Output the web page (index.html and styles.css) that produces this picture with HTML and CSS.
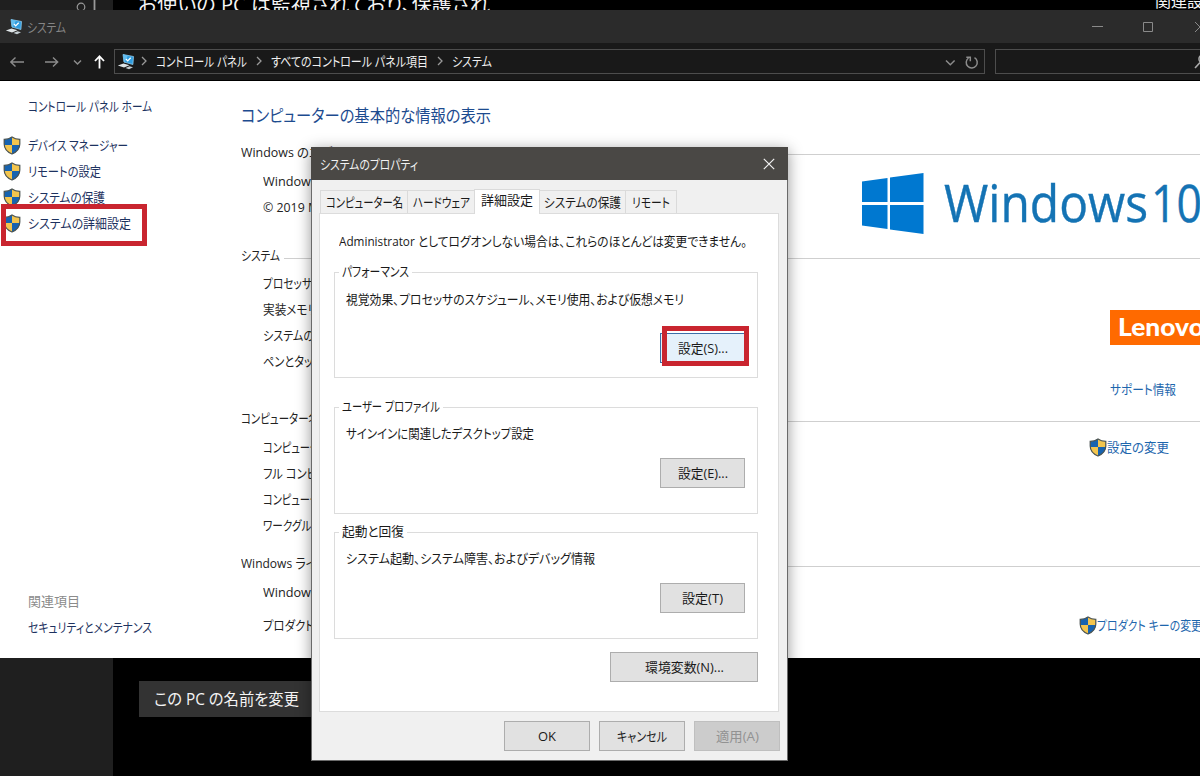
FILE: index.html
```
<!DOCTYPE html>
<html lang="ja">
<head>
<meta charset="utf-8">
<title>システム</title>
<link rel="stylesheet" href="styles.css">
</head>
<body>
<svg class="defs" width="0" height="0">
  <symbol id="shield" viewBox="0 0 18 19">
    <path d="M9 1C6.800 2.600 4 3.300 1.200 3.300V8c0 5 3 8 7.800 10 4.800-2 7.800-5 7.800-10V3.300C14 3.300 11.200 2.600 9 1z" fill="#f3c54e"/>
    <path d="M9 1C6.800 2.600 4 3.300 1.200 3.300V9H9zM9 9h7.700c-.4 4.500-3.300 7.200-7.700 9z" fill="#1763b0"/>
    <path d="M9 1C6.800 2.600 4 3.300 1.200 3.300V8c0 5 3 8 7.800 10 4.800-2 7.800-5 7.800-10V3.300C14 3.300 11.200 2.600 9 1z" fill="none" stroke="#4a5352" stroke-width="1.2"/>
  </symbol>
  <symbol id="pc" viewBox="0 0 18 17">
    <path d="M6 1.500l10.500 2-.6 8L7 9z" fill="#2f9de0" stroke="#8fc9ea" stroke-width=".8"/>
    <path d="M6 1.500l5 1-3.500 7-.5-.3z" fill="#63bdee"/>
    <path d="M9 6l1.700 1.900 3-3.200" fill="none" stroke="#fff" stroke-width="1.300"/>
    <path d="M.8 12.500l5.700-2 6 1.700-5.500 2.300z" fill="#dfe5e8"/>
    <path d="M8.500 15l4-1.800 3.500 1-4 2z" fill="#c5ced3"/>
  </symbol>
</svg>
<div class="desktop">
  <div class="settings">
    <div class="settings-side">
      <svg class="settings-search" width="24" height="12" viewBox="0 0 24 12" fill="none" stroke="#999" stroke-width="1.200"><circle cx="9" cy="7" r="3.800"/><path d="M22.500 0v12" stroke-width="1.800"/></svg>
    </div>
    <div class="settings-main">
      <div class="settings-top">
        <span class="t" data-w="352">お使いの PC は監視されており、保護され</span>
        <span class="settings-rel">関連設定</span>
      </div>
      <div class="rename"><span class="t" data-w="145">この PC の名前を変更</span></div>
    </div>
  </div>

  <div class="window">
    <div class="titlebar">
      <svg width="18" height="17"><use href="#pc"/></svg>
      <span class="t caption" data-w="39">システム</span>
      <svg class="win-buttons" width="112" height="20" viewBox="0 0 112 20" fill="none" stroke="#8a8a8a"><path d="M4 9.500h11M55.500 5.500h9v9h-9zM107 5l10 10M117 5l-10 10"/></svg>
    </div>
    <div class="navbar">
      <svg class="nav-icons" width="114" height="24" viewBox="0 0 114 24" fill="none" stroke="#8c8c8c" stroke-width="1.400">
        <path d="M24 13H11M15.500 8.500L10.800 13l4.700 4.500M45 13h13M53 8.500l4.700 4.500-4.700 4.500"/>
        <path d="M74 11.500l3.500 3.500 3.500-3.500" stroke-width="1.500"/>
        <path d="M99.500 19.500v-12M95 12l4.500-4.800L104 12" stroke="#fff" stroke-width="1.800"/>
      </svg>
      <div class="address">
        <svg width="18" height="17"><use href="#pc"/></svg>
        <svg class="sep first" width="8" height="10"><path d="M2 1l4 4-4 4"/></svg>
        <span class="t" data-w="91">コントロール パネル</span>
        <svg class="sep" width="8" height="10"><path d="M2 1l4 4-4 4"/></svg>
        <span class="t" data-w="157">すべてのコントロール パネル項目</span>
        <svg class="sep" width="8" height="10"><path d="M2 1l4 4-4 4"/></svg>
        <span class="t" data-w="40">システム</span>
        <svg class="refresh" width="38" height="18" viewBox="0 0 38 18" fill="none" stroke="#8c8c8c" stroke-width="1.500"><path d="M2 7.500l4.300 4.300 4.300-4.300"/><path d="M30.500 4.700A5.500 5.500 0 1 1 24.500 5M22.300 4.200h4v4"/></svg>
      </div>
      <div class="search">
        <svg width="16" height="16" viewBox="0 0 16 16" fill="none" stroke="#aaa" stroke-width="1.600"><path d="M1 14l5-5.500"/><circle cx="9" cy="5" r="4"/></svg>
      </div>
    </div>
    <div class="pane">
      <div class="sidebar">
        <div class="home"><span class="t" data-w="124">コントロール パネル ホーム</span></div>
        <div class="task"><svg width="18" height="19"><use href="#shield"/></svg><span class="t" data-w="100">デバイス マネージャー</span></div>
        <div class="task"><svg width="18" height="19"><use href="#shield"/></svg><span class="t" data-w="73">リモートの設定</span></div>
        <div class="task"><svg width="18" height="19"><use href="#shield"/></svg><span class="t" data-w="77">システムの保護</span></div>
        <div class="task marked"><svg width="18" height="19"><use href="#shield"/></svg><span class="t" data-w="103">システムの詳細設定</span></div>
        <div class="see-also"><span class="muted">関連項目</span><span class="t" data-w="124">セキュリティとメンテナンス</span></div>
      </div>
      <div class="main">
        <h1><span class="t" data-w="250">コンピューターの基本的な情報の表示</span></h1>
        <div class="section edition">
          <div class="head"><span class="t" data-w="132">Windows のエディション</span><i></i></div>
          <div class="body">
            <div class="rows"><div><span class="t" data-w="54">Windows</span></div><div><span class="t" data-w="56">© 2019 M</span></div></div>
            <div class="brand">
              <svg width="64" height="64" viewBox="0 0 64 64" fill="#0078d0"><path d="M1 9.500L26.500 6v24H1zM29 5.600L62.500 1v29H29zM1 33h25.500v24L1 53.500zM29 33h33.500v29L29 57.400z"/></svg>
              <span class="t brand-name" data-w="204">Windows</span><span class="t brand-name" data-w="51">10</span>
            </div>
          </div>
        </div>
        <div class="section system">
          <div class="head"><span class="t" data-w="39">システム</span><i></i></div>
          <div class="body">
            <div class="rows"><div><span class="t" data-w="49">プロセッサ</span></div><div><span class="t" data-w="54">実装メモリ</span></div><div><span class="t" data-w="51">システムの</span></div><div><span class="t" data-w="60">ペンとタッチ</span></div></div>
            <div class="oem"><div class="lenovo"><span class="t" data-w="86">Lenovo</span></div><span class="t" data-w="66">サポート情報</span></div>
          </div>
        </div>
        <div class="section name">
          <div class="head"><span class="t" data-w="78">コンピューター名</span><i></i></div>
          <div class="body">
            <div class="rows"><div><span class="t" data-w="66">コンピューター</span></div><div><span class="t" data-w="107">フル コンピューター名</span></div><div><span class="t" data-w="66">コンピューター</span></div><div><span class="t" data-w="68">ワークグループ</span></div></div>
            <div class="link change"><svg width="18" height="19"><use href="#shield"/></svg><span class="t" data-w="62">設定の変更</span></div>
          </div>
        </div>
        <div class="section license">
          <div class="head"><span class="t" data-w="132">Windows ライセンス認証</span><i></i></div>
          <div class="body">
            <div class="rows"><div><span class="t" data-w="54">Windows</span></div><div><span class="t" data-w="51">プロダクト</span></div></div>
            <div class="link key"><svg width="18" height="19"><use href="#shield"/></svg><span class="t" data-w="105">プロダクト キーの変更</span></div>
          </div>
        </div>
      </div>
    </div>
  </div>

  <div class="dialog">
    <div class="dialog-title"><span class="t" data-w="98">システムのプロパティ</span>
      <svg width="12" height="12" viewBox="0 0 12 12" stroke="#f2f2f2" stroke-width="1.200"><path d="M.8.800l10.400 10.400M11.200.800L.8 11.200"/></svg>
    </div>
    <div class="tabs">
      <div class="tab t1"><span class="t" data-w="77">コンピューター名</span></div>
      <div class="tab t2"><span class="t" data-w="57">ハードウェア</span></div>
      <div class="tab t3 on"><span class="t" data-w="52">詳細設定</span></div>
      <div class="tab t4"><span class="t" data-w="77">システムの保護</span></div>
      <div class="tab t5"><span class="t" data-w="38">リモート</span></div>
    </div>
    <div class="sheet">
      <div class="note"><span class="t" data-w="408">Administrator としてログオンしない場合は、これらのほとんどは変更できません。</span></div>
      <fieldset class="g1">
        <legend><span class="t" data-w="67">パフォーマンス</span></legend>
        <div class="desc"><span class="t" data-w="338">視覚効果、プロセッサのスケジュール、メモリ使用、および仮想メモリ</span></div>
        <div class="btn hot"><span class="t" data-w="50">設定(S)...</span></div>
      </fieldset>
      <fieldset class="g2">
        <legend><span class="t" data-w="98">ユーザー プロファイル</span></legend>
        <div class="desc"><span class="t" data-w="188">サインインに関連したデスクトップ設定</span></div>
        <div class="btn"><span class="t" data-w="50">設定(E)...</span></div>
      </fieldset>
      <fieldset class="g3">
        <legend><span class="t" data-w="62">起動と回復</span></legend>
        <div class="desc"><span class="t" data-w="249">システム起動、システム障害、およびデバッグ情報</span></div>
        <div class="btn"><span class="t" data-w="41">設定(T)</span></div>
      </fieldset>
      <div class="btn env"><span class="t" data-w="79">環境変数(N)...</span></div>
    </div>
    <div class="footer">
      <div class="btn"><span class="t" data-w="18">OK</span></div>
      <div class="btn"><span class="t" data-w="50">キャンセル</span></div>
      <div class="btn off"><span class="t" data-w="43">適用(A)</span></div>
    </div>
  </div>
</div>
<script src="fit.js"></script>
</body>
</html>
```

FILE: styles.css
```
*, *::after { box-sizing: border-box; }
body {
  margin: 0;
  font: 13px/20px "Open Sans", "Noto Sans CJK JP", sans-serif;
  font-feature-settings: "palt";
  color: #222;
}
.defs { position: absolute; }
.desktop { position: relative; width: 1200px; height: 776px; overflow: hidden; background: #000; }
svg { display: block; flex: none; }
.t { display: inline-block; white-space: nowrap; transform-origin: 0 50%; flex: none; }

/* settings window at the back */
.settings { display: flex; height: 776px; }
.settings-side { width: 113px; flex: none; background: #1f1f1f; }
.settings-search { margin-left: 72px; }
.settings-main { flex: 1; min-width: 0; color: #f4f4f4; }
.settings-top { display: flex; height: 10px; padding-left: 25px; font-size: 20px; line-height: 10px; white-space: nowrap; }
.settings-rel { margin-left: 665px; font-size: 16px; line-height: 2px; }
.rename {
  margin: 671px 0 0 26px; padding-left: 15px; width: 300px; height: 36px;
  background: #333; font-size: 16px; line-height: 36px;
}

/* control panel window */
.window { position: absolute; left: 0; top: 10px; width: 1200px; height: 648px; overflow: hidden; background: #fff; }
.titlebar { display: flex; align-items: center; height: 33px; padding-left: 5px; background: #2b2b2b; }
.caption { margin-left: 4px; color: #858585; }
.win-buttons { margin-left: auto; }
.navbar { display: flex; height: 38px; padding-top: 6px; background: #191919; border-bottom: 1px solid #000; }
.nav-icons { flex: none; }
.address { display: flex; align-items: center; flex: none; width: 871px; height: 25px; padding-left: 2px; border: 1px solid #4d4d4d; color: #f0f0f0; }
.address .t { margin-top: -2px; }
.address .sep { fill: none; stroke: #999; stroke-width: 1.3; margin: -1px 8px 0; }
.address .first { margin-left: 5px; }
.address .refresh { margin-left: auto; margin-right: 2px; }
.search { width: 220px; height: 25px; margin-left: 10px; padding: 4px 0 0 198px; border: 1px solid #4d4d4d; flex: none; }
.pane { display: flex; height: 577px; }
.sidebar { width: 241px; flex: none; padding-top: 15px; color: #1d3260; }
.home { padding-left: 28px; margin-bottom: 16px; }
.task { display: flex; align-items: center; height: 26px; padding-left: 3px; gap: 7px; }
.marked { position: relative; }
.marked::after { content: ""; position: absolute; left: 1px; top: -6px; width: 146px; height: 42px; border: 5px solid #c9252f; }
.see-also { display: flex; flex-direction: column; align-items: flex-start; gap: 6px; padding: 355px 0 0 28px; }
.muted { color: #8b8b8b; }
.main { width: 959px; flex: none; padding-top: 20px; }
h1 { margin: 0 0 9px; font-size: 17px; line-height: 30px; font-weight: 400; color: #1d4b8f; }
.head { display: flex; height: 26px; line-height: 25px; gap: 4px; }
.head i { flex: 1; height: 1px; margin-top: 15px; background: #cfcfcf; }
.edition .head i { margin-top: 14px; }
.edition { height: 103px; }
.system { height: 163px; }
.name { height: 145px; }
.body { display: flex; }
.rows { width: 619px; flex: none; padding: 2px 0 0 22px; line-height: 26px; }
.rows > div { height: 26px; }
.system .rows { line-height: 25px; }
.license .rows { padding-top: 3px; line-height: 25px; }
.license .rows > div:last-child { margin-top: 7px; }
.brand { display: flex; align-items: center; height: 64px; margin: 6px 0 0 1px; }
.brand-name { font-size: 51px; line-height: 64px; margin-top: -5px; color: #1473b4; -webkit-text-stroke: .4px #1473b4; }
.brand svg { margin-right: 19px; }
.brand-name + .brand-name { margin-left: 3px; }
.oem { margin: 41px 0 0 250px; color: #1d66ad; }
.lenovo { width: 120px; height: 35px; margin-bottom: 34px; padding-left: 8px; background: #ff6a00; color: #fff; font: 900 24px/33px Lato, sans-serif; }
.link { display: flex; align-items: center; height: 20px; color: #1d66ad; }
.change { margin: 5px 0 0 229px; }
.key { margin: 38px 0 0 219px; }

/* properties dialog */
.dialog {
  position: absolute; left: 311px; top: 147px; width: 477px; height: 614px;
  background: #f0f0f0; border: 1px solid #6a6a6a; color: #1a1a1a;
  box-shadow: 0 3px 14px rgba(0, 0, 0, .42);
}
.dialog-title {
  display: flex; align-items: center; justify-content: space-between;
  height: 33px; margin: -1px -1px 0; padding: 0 13px 0 9px; background: #4a4845; color: #f2f2f2;
}
.tabs { display: flex; align-items: flex-end; height: 33px; padding-left: 8px; }
.tab { display: flex; align-items: center; justify-content: center; height: 23px; border: 1px solid #dadada; border-width: 1px 1px 0 0; }
.t1 { width: 88px; border-left-width: 1px; }
.t2 { width: 66px; border-right: 0; }
.t3 { width: 66px; }
.t4 { width: 86px; }
.t5 { width: 51px; }
.on { position: relative; height: 25px; margin-bottom: -1px; padding-bottom: 4px; border-left-width: 1px; background: #fff; }
.sheet { width: 460px; height: 499px; margin-left: 7px; padding: 17px 20px 0 14px; background: #fff; border: 1px solid #dcdcdc; }
.note { padding-left: 5px; height: 31px; }
.note .t { margin-top: -1px; }
fieldset { display: block; margin: 0; padding: 0 12px 0 11px; min-width: 0; width: 424px; height: 117px; border: 1px solid #dcdcdc; }
legend { padding: 0 3px; margin-left: -7px; height: 20px; line-height: 19px; }
.desc { height: 20px; line-height: 18px; margin-top: 7px; }
.btn { display: flex; align-items: center; justify-content: center; width: 85px; height: 30px; padding-bottom: 1px; background: #e1e1e1; border: 1px solid #adadad; }
fieldset .btn { margin: 14px 0 0 auto; }
.g1 { height: 116px; margin-bottom: 19px; }
.g1 .desc { margin-top: 8px; }
.g1 .btn { margin-top: 23px; }
.g2 { margin-bottom: 8px; }
.hot { position: relative; background: #e5f1fb; border-color: #3c6fa8; }
.hot::after { content: ""; position: absolute; left: 1px; top: -8px; width: 87px; height: 40px; border: 5px solid #c9252f; }
.env { width: 148px; margin: 13px 0 0 auto; }
.footer { display: flex; justify-content: flex-end; gap: 9px; padding: 9px 7px 0 0; }
.footer .btn { width: 86px; }
.footer .off { background: #ccc; border-color: #bfbfbf; color: #929292; }
```

FILE: fit.js
```
// Condenses each label horizontally to its intended UI width.
document.querySelectorAll(".t[data-w]").forEach(function (el) {
  var want = Number(el.dataset.w);
  var natural = el.getBoundingClientRect().width;
  el.style.width = want + "px";
  el.style.transform = "scaleX(" + want / natural + ")";
});
```
